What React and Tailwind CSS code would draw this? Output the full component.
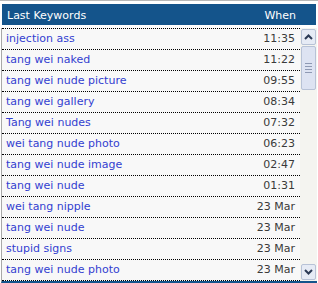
import React from 'react'

const rows = [
  ['injection ass', '11:35'],
  ['tang wei naked', '11:22'],
  ['tang wei nude picture', '09:55'],
  ['tang wei gallery', '08:34'],
  ['Tang wei nudes', '07:32'],
  ['wei tang nude photo', '06:23'],
  ['tang wei nude image', '02:47'],
  ['tang wei nude', '01:31'],
  ['wei tang nipple', '23 Mar'],
  ['tang wei nude', '23 Mar'],
  ['stupid signs', '23 Mar'],
  ['tang wei nude photo', '23 Mar'],
]

function Arrow({ up }){
  return (
    <svg width="9" height="6" viewBox="0 0 9 6">
      <path d={up ? 'M1 5 L4.5 1.5 L8 5' : 'M1 1 L4.5 4.5 L8 1'} fill="none" stroke="#2b3a55" strokeWidth="2" />
    </svg>
  )
}

export default function App(){
  return (
    <div className="w-[318px] h-[283px] bg-white overflow-hidden flex flex-col border-t border-[#b8b8b8]" style={{ fontFamily: '"DejaVu Sans", Verdana, sans-serif' }}>
      <div className="mt-[3px] mx-[2px] h-[21px] bg-[#14548b] text-white text-[11px] flex items-end justify-between pb-[1px] pl-[5px] pr-[20px]">
        <span>Last Keywords</span>
        <span>When</span>
      </div>
      <div className="flex-1 flex ml-[1px] mr-[1px] border-l border-[#a8a8a8] bg-[#f8f8f8] border-b-2 border-b-[#14548b] mt-[3px]">
        <div className="flex-1 border-t border-dotted border-black">
          {rows.map(([k, t], i) => (
            <div key={i} className="h-[21px] flex items-center justify-between pl-[4px] pr-[5px] border-b border-dotted border-black text-[11px]">
              <span className="text-[#3340d0]">{k}</span>
              <span className="text-[#3a3a3a]">{t}</span>
            </div>
          ))}
        </div>
        <div className="w-[17px] flex flex-col bg-[#f4f4f0] pt-[1px]">
          <div className="h-[16px] mx-[1px] rounded-[2px] border border-[#b7c2d6] bg-[#e6ebf5] flex items-center justify-center">
            <Arrow up />
          </div>
          <div className="h-[44px] mx-[1px] mt-[1px] rounded-[2px] border border-[#b7c2d6] bg-[#dde3f2] flex flex-col items-center justify-center gap-[2px]">
            <div className="w-[7px] h-[1px] bg-[#8e99b3]" />
            <div className="w-[7px] h-[1px] bg-[#8e99b3]" />
            <div className="w-[7px] h-[1px] bg-[#8e99b3]" />
            <div className="w-[7px] h-[1px] bg-[#8e99b3]" />
          </div>
          <div className="flex-1" />
          <div className="h-[16px] mx-[1px] mb-[1px] rounded-[2px] border border-[#b7c2d6] bg-[#e6ebf5] flex items-center justify-center">
            <Arrow />
          </div>
        </div>
      </div>
    </div>
  )
}
